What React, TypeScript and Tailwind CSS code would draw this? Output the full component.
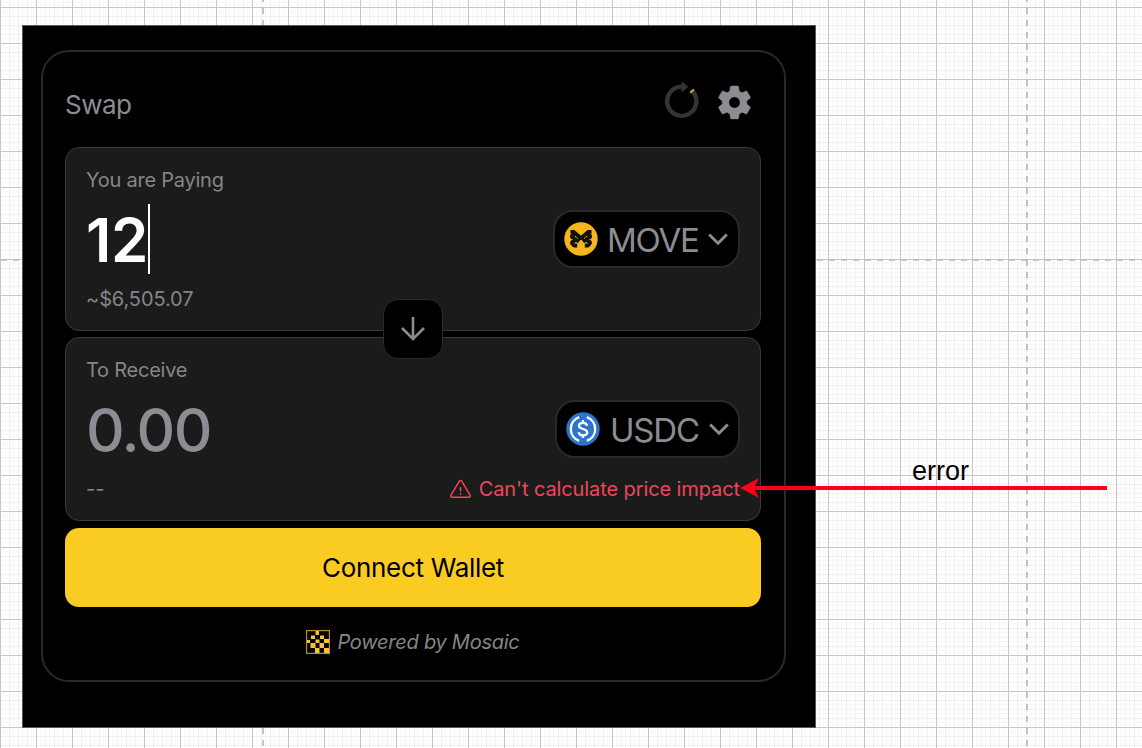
import type { ReactNode } from 'react';

const UI = "font-['Inter','Liberation_Sans',sans-serif]";

function Canvas() {
  return (
    <svg className="absolute inset-0" width="1142" height="748" aria-hidden="true">
      <defs>
        <pattern id="grid" width="36" height="36" y="7" patternUnits="userSpaceOnUse">
          <path d="M9.5 0V36M18.5 0V36M27.5 0V36M0 9.5H36M0 18.5H36M0 27.5H36" stroke="#efefef" />
          <path d="M4.5 0V36M13.5 0V36M22.5 0V36M31.5 0V36M0 4.5H36M0 13.5H36M0 22.5H36M0 31.5H36" stroke="#f8f8f8" />
          <path d="M.5 0V36M0 .5H36" stroke="#c6c6c6" />
        </pattern>
      </defs>
      <rect width="1142" height="748" fill="#fff" />
      <rect width="1142" height="748" fill="url(#grid)" />
      <path d="M263 -4V748M1027 -4V748" stroke="#b8b8b8" strokeWidth="1.7" strokeDasharray="6 6" />
      <path d="M1 260H1142" stroke="#b8b8b8" strokeWidth="1.7" strokeDasharray="6 6" />
    </svg>
  );
}

function Refresh() {
  return (
    <svg width="36" height="40" viewBox="0 0 36 40" fill="none">
      <path d="M28.2 9A14.6 14.6 0 1 1 17.5 4.6" stroke="#333436" strokeWidth="4.4" />
      <path d="M17.5 -.8L24.2 4.8L17.5 10.4Z" fill="#333436" />
      <path d="M26.2 10.8L29.9 7.4" stroke="#d6a829" strokeWidth="2" />
    </svg>
  );
}

function Gear() {
  return (
    <svg width="41" height="41" viewBox="0 0 24 24" fill="#8b8d92">
      <path d="M19.14 12.94c.04-.3.06-.61.06-.94 0-.32-.02-.64-.07-.94l2.03-1.58a.49.49 0 0 0 .12-.61l-1.92-3.32a.488.488 0 0 0-.59-.22l-2.39.96c-.5-.38-1.03-.7-1.62-.94l-.36-2.54a.484.484 0 0 0-.48-.41h-3.84c-.24 0-.43.17-.47.41l-.36 2.54c-.59.24-1.13.57-1.62.94l-2.39-.96c-.22-.08-.47 0-.59.22L2.74 8.87c-.12.21-.08.47.12.61l2.03 1.58c-.05.3-.09.63-.09.94s.02.64.07.94l-2.03 1.58a.49.49 0 0 0-.12.61l1.92 3.32c.12.22.37.29.59.22l2.39-.96c.5.38 1.03.7 1.62.94l.36 2.54c.05.24.24.41.48.41h3.84c.24 0 .44-.17.47-.41l.36-2.54c.59-.24 1.13-.56 1.62-.94l2.39.96c.22.08.47 0 .59-.22l1.92-3.32c.12-.22.07-.47-.12-.61l-2.01-1.58zM12 15.3a3.3 3.3 0 1 1 0-6.6 3.3 3.3 0 0 1 0 6.6z" stroke="#8b8d92" strokeWidth=".3" />
    </svg>
  );
}

function MoveLogo() {
  return (
    <svg width="34" height="34" viewBox="0 0 34 34">
      <circle cx="17" cy="17" r="16.7" fill="#f5b51c" />
      <g stroke="#11110d" strokeWidth="3.8" fill="none" strokeLinejoin="bevel">
        <path d="M6.5 9.8H9.5L17 16.2L24.5 9.8H27.5" />
        <path d="M10.5 12L7.2 14.5L12 17.6L7.5 20.6L10 23.5H13.2M23.5 12L26.8 14.5L22 17.6L26.5 20.6L24 23.5H20.8" />
        <path d="M16 16L12.6 20.2M18 16L21.4 20.2" strokeWidth="3" />
      </g>
    </svg>
  );
}

function UsdcLogo() {
  return (
    <svg width="34" height="34" viewBox="0 0 34 34" fill="none" stroke="#fff" strokeWidth="2.3">
      <circle cx="17" cy="17" r="16.7" fill="#2c75cb" stroke="none" />
      <path d="M13.2 5.2A12.5 12.5 0 0 0 13.2 28.8M20.8 5.2A12.5 12.5 0 0 1 20.8 28.8" />
      <path d="M21 13.8C20.7 11.7 19.2 10.8 17 10.8c-2.4 0-4 1.1-4 3 0 4.4 8.2 2 8.2 6.4 0 2-1.7 3.1-4.2 3.1-2.6 0-4.1-1.1-4.3-3.2M17 8V11M17 23V26" />
    </svg>
  );
}

function Chevron() {
  return (
    <svg width="20" height="14" viewBox="0 0 20 14" fill="none" stroke="#8b8d92" strokeWidth="2.9">
      <path d="M1.2 2.5L10 11.3L18.8 2.5" />
    </svg>
  );
}

function MosaicLogo() {
  return (
    <svg width="24" height="24" viewBox="0 0 24 24">
      <rect x=".6" y=".6" width="22.8" height="22.8" fill="#000" stroke="#b88d24" strokeWidth="1.2" />
      <path
        d="M9.5 1h3.5v4h-3.5ZM5 5.5h4v3.5H5ZM14 5.5h4v3.5h-4ZM9.5 9.5h4v3.5h-4ZM1 10h3v3H1ZM18 9h5v4h-5ZM4.5 13h5v5h-5ZM13.5 13h4.5v5h-4.5ZM9 18h4.5v5H9ZM18 18h5v5h-5Z"
        fill="#f8c52c"
      />
    </svg>
  );
}

function Token({ logo, name, className }: { logo: ReactNode; name: string; className: string }) {
  return (
    <button className={`flex h-[58px] items-center rounded-[20px] border-2 border-[#29292a] bg-black pl-[9px] text-[33px] leading-none text-[#8b8d92] ${className}`}>
      {logo}
      <span className="pt-[2px] tracking-[-1.2px]">{name}</span>
      <Chevron />
    </button>
  );
}

export default function App() {
  return (
    <main className={`relative h-[748px] w-[1142px] overflow-hidden pl-[22px] pt-[25px] ${UI}`}>
      <Canvas />
      <div className="relative h-[703px] w-[794px] border border-[#55575a] bg-black pl-[18px] pt-6">
        <section className="h-[632px] w-[745px] rounded-[28px] border-2 border-[#29292a] pl-[22px] pr-[23px]">
          <header className="flex h-[95px] items-start justify-between pr-[6px] text-[#8b8d92]">
            <h1 className="pt-9 text-[26px] leading-[34px] tracking-[-0.5px]">Swap</h1>
            <div className="flex gap-[14px] pt-[30px]">
              <Refresh />
              <Gear />
            </div>
          </header>

          <div className="relative flex flex-col gap-[6px]">
            <div className="flex h-[184px] items-start justify-between rounded-[14px] border border-[#39393a] bg-[#1b1b1c] pl-5 pr-5">
              <div className="text-[#858589]">
                <p className="pt-[19px] text-[20px] leading-[26px] tracking-[-0.24px]">You are Paying</p>
                <div className="mt-[11px] flex h-[70px] items-center">
                  <span className="pt-px text-[60px] font-semibold leading-[70px] tracking-[-0.3px] text-white">12</span>
                  <span className="h-[70px] w-[2px] bg-white" />
                </div>
                <p className="mt-[12px] text-[20px] leading-[26px] tracking-[-0.1px]">~$6,505.07</p>
              </div>
              <Token className="mt-[62px] w-[187px] gap-[9px]" logo={<MoveLogo />} name="MOVE" />
            </div>

            <div className="flex h-[184px] flex-col rounded-[14px] border border-[#39393a] bg-[#1b1b1c] px-5 text-[#858589]">
              <p className="pt-[19px] text-[20px] leading-[26px] tracking-[-0.24px]">To Receive</p>
              <div className="mt-[11px] flex h-[70px] items-center justify-between">
                <span className="pt-[2px] text-[60px] font-medium leading-[70px] tracking-[-1.6px] text-[#8b8d92]">0.00</span>
                <Token className="w-[185px] gap-[10px]" logo={<UsdcLogo />} name="USDC" />
              </div>
              <div className="mt-[12px] flex items-center justify-between text-[20px] leading-[26px]">
                <span>--</span>
                <span className="flex items-center gap-[8px] tracking-[-0.1px] text-[#ef4656]">
                  <svg width="21" height="20" viewBox="0 0 21 20" fill="none" stroke="currentColor" strokeWidth="1.5">
                    <path d="M9.3 2.1a1.4 1.4 0 0 1 2.4 0L20 16.2a1.3 1.3 0 0 1-1.1 2H2.1a1.3 1.3 0 0 1-1.1-2ZM10.5 8v4.5M10.5 14v1.7" />
                  </svg>
                  Can't calculate price impact
                </span>
              </div>
            </div>

            <button className="absolute left-[318px] top-[152px] flex h-[60px] w-[60px] items-center justify-center rounded-[15px] border border-[#29292a] bg-black">
              <svg width="26" height="26" viewBox="0 0 26 26" fill="none" stroke="#8b8d92" strokeWidth="2.6">
                <path d="M13 1V23M2 12L13 23L24 12" />
              </svg>
            </button>
          </div>

          <button className="mt-[7px] flex h-[79px] w-full items-center justify-center rounded-[14px] bg-[#facb20] text-[26px] tracking-[-0.3px] text-black">
            Connect Wallet
          </button>
          <footer className="mt-[23px] flex h-6 items-center justify-center gap-[7px] text-[20px] italic tracking-[-0.25px] text-[#858589]">
            <MosaicLogo />
            <span>Powered by Mosaic</span>
          </footer>
        </section>
      </div>

      <div className="absolute left-[740px] top-[455px] h-11 w-[367px]">
        <p className="pl-[172px] font-['Liberation_Sans',sans-serif] text-[27px] leading-[32px] text-black">error</p>
        <svg className="absolute left-0 top-[22px]" width="367" height="22">
          <path d="M12 11H367" stroke="#fb0018" strokeWidth="4" />
          <path d="M0 11L19 1L14 11L19 21Z" fill="#fb0018" />
        </svg>
      </div>
    </main>
  );
}
